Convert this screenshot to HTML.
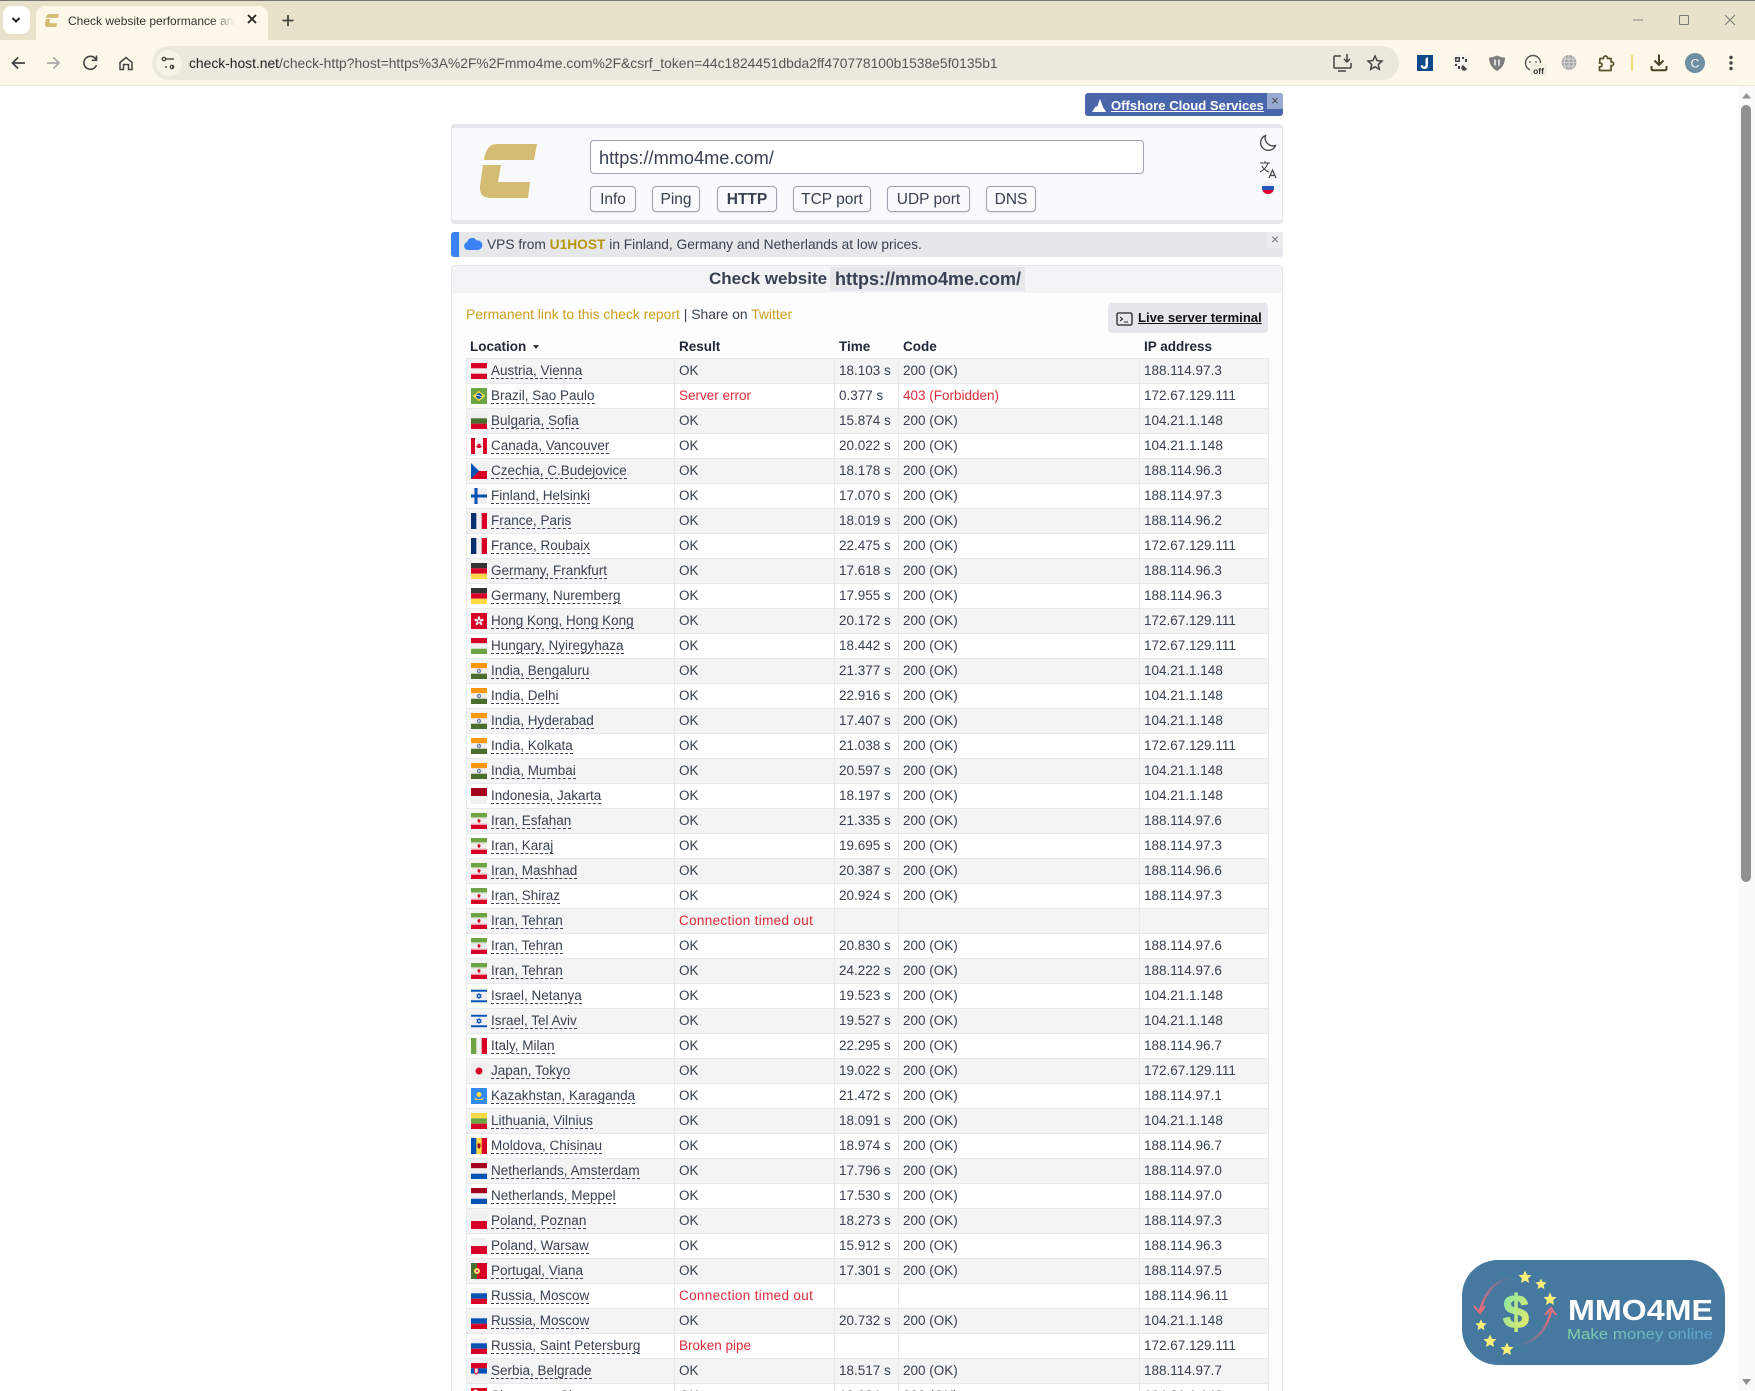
<!DOCTYPE html>
<html lang="en"><head><meta charset="utf-8"><title>Check website performance and response</title>
<style>
*{box-sizing:border-box}
html,body{margin:0;padding:0;width:1755px;height:1391px;overflow:hidden;background:#fff}
body{font-family:"Liberation Sans",sans-serif;color:#374151;font-size:13.5px;position:relative}
.a{position:absolute}
.tb{left:0;top:0;width:1755px;height:40px;background:#e7e2c9;border-top:1px solid #777}
.tl{left:0;top:40px;width:1755px;height:46px;background:#fdf8ea;border-bottom:1px solid #ece8da}
.tab{left:36px;top:6px;width:232px;height:34px;background:#fdf8ea;border-radius:9px 9px 0 0}
.chev{left:3px;top:6px;width:27px;height:28px;background:#fff;border-radius:8px}
.title{left:68px;top:13px;width:168px;height:16px;font-size:12px;line-height:16px;color:#333;white-space:nowrap;overflow:hidden;-webkit-mask-image:linear-gradient(90deg,#000 85%,transparent)}
.addr{left:152px;top:46px;width:1247px;height:34px;background:#ece8dd;border-radius:17px}
.url{left:189px;top:55px;font-size:13.85px;line-height:16px;color:#555;white-space:nowrap}
.url b{font-weight:400;color:#1f1f1f}
.ad{left:1085px;top:93px;width:198px;height:23px;background:#4a66ab;border-radius:3px;color:#fff;font-weight:bold;font-size:13.1px;line-height:25px;padding-left:26px;overflow:hidden}
.ad u{white-space:nowrap}
.ad i{position:absolute;right:0;top:0;width:16px;height:16px;background:#9aa9d0;color:#444;font:normal 13px/15px "Liberation Sans",sans-serif;text-align:center}
.panel{left:451px;top:124px;width:832px;height:100px;background:#f9fafb;border:solid #e5e7eb;border-width:4px 1px;border-radius:3px}
.input{left:590px;top:140px;width:554px;height:34px;background:#fff;border:1px solid #9ca3af;border-radius:4px;font-size:18.2px;line-height:34px;padding-left:8px;color:#374151}
.btn{top:186px;height:26px;background:#f9fafb;border:1px solid #9ca3af;border-radius:4px;font-size:15.5px;line-height:26px;text-align:center;color:#374151;box-shadow:0 1px 2px rgba(0,0,0,.08)}
.alert{left:451px;top:232px;width:832px;height:25px;background:#e5e7eb;border-left:8px solid #3b82f6;border-radius:3px;font-size:13.75px;line-height:26px;padding-left:28px;color:#374151;white-space:nowrap}
.alert b{color:#b8960c}
.alx{left:1267px;top:232px;width:16px;height:16px;background:#ececee;color:#777;font-size:14px;line-height:15px;text-align:center}
.card{left:451px;top:265px;width:832px;height:1130px;background:#fdfdfd;border:1px solid #e5e7eb;border-radius:4px 4px 0 0}
.chead{left:452px;top:266px;width:830px;height:27px;background:#f3f4f6}
.ch1{left:709px;top:267px;font-size:17px;font-weight:bold;line-height:24px;color:#374151;white-space:nowrap}
.ch2{left:830px;top:267px;width:195px;height:24px;background:#e5e7eb;font-size:18px;font-weight:bold;line-height:25px;padding-left:5px;white-space:nowrap}
.perm{left:466px;top:305px;line-height:18px;font-size:13.9px;color:#374151;white-space:nowrap}
.perm span{color:#ca9f1a}
.term{left:1108px;top:303px;width:160px;height:30px;background:#e5e7eb;border-radius:4px}
.term u{position:absolute;left:30px;top:7px;font-size:13.1px;font-weight:bold;line-height:16px;color:#111;white-space:nowrap}
.h{top:339px;font-weight:bold;font-size:13.5px;line-height:16px;color:#1f2937;white-space:nowrap}
table{position:absolute;left:466px;top:358px;width:802px;table-layout:fixed;border-collapse:collapse}
td{height:25px;padding:0 0 0 4px;border:1px solid #e8e9eb;white-space:nowrap;overflow:hidden;line-height:16px;color:#374151}
tr:nth-child(odd) td{background:#f4f4f5}
tr:nth-child(even) td{background:#fff}
td:first-child{position:relative;padding-left:24px}
td a{display:inline-block;line-height:15px;border-bottom:1px dashed #374151}
.f{position:absolute;left:4px;top:4px;width:16px;height:16px}
td.r{color:#e02a3a}
td.c{letter-spacing:.33px}
.sb{left:1738px;top:86px;width:17px;height:1305px;background:#fafafa}
.th{left:1741px;top:105px;width:10px;height:777px;background:#909090;border-radius:5px}
</style></head><body>
<svg width="0" height="0" style="position:absolute"><defs>
<symbol id="s" viewBox="0 0 16 16"><path d="M8 .5l2.2 4.9 5.300.6-4 3.600 1.100 5.300L8 12.200l-4.600 2.700 1.100-5.300-4-3.600 5.300-.6z"/></symbol>
<symbol id="at" viewBox="0 0 16 16"><rect width="16" height="16" fill="#f0f0f0"/><rect width="16" height="5.300" fill="#d80027"/><rect y="10.700" width="16" height="5.300" fill="#d80027"/></symbol>
<symbol id="br" viewBox="0 0 16 16"><rect width="16" height="16" fill="#6da544"/><path d="M8 3l6.500 5L8 13 1.500 8z" fill="#ffda44"/><circle cx="8" cy="8" r="2.900" fill="#0052b4"/><path d="M5.300 7.400q3-.3 5.300 1.600" stroke="#f0f0f0" fill="none" stroke-width=".7"/></symbol>
<symbol id="bg" viewBox="0 0 16 16"><rect width="16" height="5.300" fill="#f0f0f0"/><rect y="5.300" width="16" height="5.400" fill="#496e2d"/><rect y="10.700" width="16" height="5.300" fill="#d80027"/></symbol>
<symbol id="ca" viewBox="0 0 16 16"><rect width="16" height="16" fill="#f0f0f0"/><rect width="4" height="16" fill="#d80027"/><rect x="12" width="4" height="16" fill="#d80027"/><path d="M8 5l.8 1.400 1-.3-.3 1.900.9-.3.4.9L9.200 10H6.800L5.200 8.600l.4-.9.9.3-.3-1.900 1 .3z" fill="#d80027"/></symbol>
<symbol id="cz" viewBox="0 0 16 16"><rect width="16" height="8" fill="#f0f0f0"/><rect y="8" width="16" height="8" fill="#d80027"/><path d="M0 0l8 8-8 8z" fill="#0052b4"/></symbol>
<symbol id="fi" viewBox="0 0 16 16"><rect width="16" height="16" fill="#f0f0f0"/><rect x="3.500" width="3" height="16" fill="#0052b4"/><rect y="6.500" width="16" height="3" fill="#0052b4"/></symbol>
<symbol id="fr" viewBox="0 0 16 16"><rect width="16" height="16" fill="#f0f0f0"/><rect width="5.300" height="16" fill="#0a2f6e"/><rect x="10.700" width="5.300" height="16" fill="#d80027"/></symbol>
<symbol id="de" viewBox="0 0 16 16"><rect width="16" height="5.300" fill="#333"/><rect y="5.300" width="16" height="5.400" fill="#d80027"/><rect y="10.700" width="16" height="5.300" fill="#ffda44"/></symbol>
<symbol id="hk" viewBox="0 0 16 16"><rect width="16" height="16" fill="#d80027"/><g fill="#f0f0f0"><ellipse cx="8" cy="5.200" rx="1.200" ry="2"/><ellipse cx="10.700" cy="7.200" rx="1.200" ry="2" transform="rotate(72 10.700 7.200)"/><ellipse cx="9.700" cy="10.300" rx="1.200" ry="2" transform="rotate(144 9.700 10.300)"/><ellipse cx="6.300" cy="10.300" rx="1.200" ry="2" transform="rotate(216 6.300 10.300)"/><ellipse cx="5.300" cy="7.200" rx="1.200" ry="2" transform="rotate(288 5.300 7.200)"/></g></symbol>
<symbol id="hu" viewBox="0 0 16 16"><rect width="16" height="5.300" fill="#d80027"/><rect y="5.300" width="16" height="5.400" fill="#f0f0f0"/><rect y="10.700" width="16" height="5.300" fill="#6da544"/></symbol>
<symbol id="in" viewBox="0 0 16 16"><rect width="16" height="5.300" fill="#ff9811"/><rect y="5.300" width="16" height="5.400" fill="#f0f0f0"/><rect y="10.700" width="16" height="5.300" fill="#496e2d"/><circle cx="8" cy="8" r="2.200" fill="#6f7fa8"/><circle cx="8" cy="8" r=".9" fill="#f0f0f0"/></symbol>
<symbol id="id" viewBox="0 0 16 16"><rect width="16" height="8" fill="#a2001d"/><rect y="8" width="16" height="8" fill="#f0f0f0"/></symbol>
<symbol id="ir" viewBox="0 0 16 16"><rect width="16" height="5.300" fill="#6da544"/><rect y="5.300" width="16" height="5.400" fill="#f0f0f0"/><rect y="10.700" width="16" height="5.300" fill="#d80027"/><rect y="4.200" width="16" height="1.200" fill="#cfd8c2"/><rect y="10.600" width="16" height="1.200" fill="#f3c6cc"/><path d="M6.400 7l1.600-1 1.600 1-.4 2L8 10l-1.200-1z" fill="#d80027"/></symbol>
<symbol id="il" viewBox="0 0 16 16"><rect width="16" height="16" y="0" fill="#f0f0f0"/><rect y="1.800" width="16" height="1.900" fill="#0052b4"/><rect y="12.300" width="16" height="1.900" fill="#0052b4"/><path d="M8 5.500l2.200 3.800H5.800zM8 10.500L5.800 6.700h4.400z" fill="none" stroke="#0052b4" stroke-width=".8"/></symbol>
<symbol id="it" viewBox="0 0 16 16"><rect width="16" height="16" fill="#f0f0f0"/><rect width="5.300" height="16" fill="#6da544"/><rect x="10.700" width="5.300" height="16" fill="#d80027"/></symbol>
<symbol id="jp" viewBox="0 0 16 16"><rect width="16" height="16" fill="#f0f0f0"/><circle cx="8" cy="8" r="3.500" fill="#d80027"/></symbol>
<symbol id="kz" viewBox="0 0 16 16"><rect width="16" height="16" fill="#338af3"/><circle cx="8" cy="6.500" r="2.500" fill="#ffda44"/><path d="M3 9.500q5 3.500 10 0l-1.500 2.500h-7z" fill="#ffda44"/></symbol>
<symbol id="lt" viewBox="0 0 16 16"><rect width="16" height="5.300" fill="#ffda44"/><rect y="5.300" width="16" height="5.400" fill="#6da544"/><rect y="10.700" width="16" height="5.300" fill="#d80027"/></symbol>
<symbol id="md" viewBox="0 0 16 16"><rect width="16" height="16" fill="#ffda44"/><rect width="5.300" height="16" fill="#0052b4"/><rect x="10.700" width="5.300" height="16" fill="#d80027"/><path d="M6.500 5.500h3v3.500L8 11 6.500 9z" fill="#a2001d"/></symbol>
<symbol id="nl" viewBox="0 0 16 16"><rect width="16" height="5.300" fill="#a2001d"/><rect y="5.300" width="16" height="5.400" fill="#f0f0f0"/><rect y="10.700" width="16" height="5.300" fill="#0052b4"/></symbol>
<symbol id="pl" viewBox="0 0 16 16"><rect width="16" height="8" fill="#f0f0f0"/><rect y="8" width="16" height="8" fill="#d80027"/></symbol>
<symbol id="pt" viewBox="0 0 16 16"><rect width="16" height="16" fill="#d80027"/><rect width="6" height="16" fill="#496e2d"/><circle cx="6" cy="8" r="3" fill="#ffda44"/><circle cx="6" cy="8" r="1.700" fill="#f0f0f0"/><circle cx="6" cy="8" r="1" fill="#d80027"/></symbol>
<symbol id="ru" viewBox="0 0 16 16"><rect width="16" height="5.300" fill="#f0f0f0"/><rect y="5.300" width="16" height="5.400" fill="#0052b4"/><rect y="10.700" width="16" height="5.300" fill="#d80027"/></symbol>
<symbol id="rs" viewBox="0 0 16 16"><rect width="16" height="5.300" fill="#d80027"/><rect y="5.300" width="16" height="5.400" fill="#0052b4"/><rect y="10.700" width="16" height="5.300" fill="#f0f0f0"/><path d="M3 3h4.500v6.500L5.200 12 3 9.500z" fill="#d80027"/><path d="M3.800 5.500h2.900v3.500L5.200 10.500 3.800 9z" fill="#f0f0f0"/></symbol>
<symbol id="sg" viewBox="0 0 16 16"><rect width="16" height="8" fill="#d80027"/><rect y="8" width="16" height="8" fill="#f0f0f0"/><circle cx="4.500" cy="4" r="2.500" fill="#f0f0f0"/></symbol>
<linearGradient id="dg" x1="0" y1="0" x2="1" y2="1"><stop offset="0" stop-color="#7fe8a8"/><stop offset="1" stop-color="#f2ea60"/></linearGradient>
<linearGradient id="tg" x1="0" y1="0" x2="1" y2="0"><stop offset="0" stop-color="#8fe0a4"/><stop offset="1" stop-color="#5fa8e0"/></linearGradient>
<linearGradient id="a1" x1="1" y1="0" x2="0" y2="1"><stop offset="0" stop-color="#45799f"/><stop offset="1" stop-color="#ee6d78"/></linearGradient>
<linearGradient id="a2" x1="0" y1="1" x2="1" y2="0"><stop offset="0" stop-color="#45799f"/><stop offset="1" stop-color="#ee6d78"/></linearGradient>
</defs></svg>

<div class="a tb"></div><div class="a tl"></div>
<div class="a chev"></div>
<div class="a tab"></div>
<div class="a title">Check website performance and response</div>
<div class="a addr"></div>
<div class="a url"><b>check-host.net</b>/check-http?host=https%3A%2F%2Fmmo4me.com%2F&amp;csrf_token=44c1824451dbda2ff470778100b1538e5f0135b1</div>

<svg class="a" style="left:0;top:0" width="1755" height="90" viewBox="0 0 1755 90" fill="none">
<path d="M12.500 18l3.500 3.500 3.500-3.500" stroke="#222" stroke-width="2"/>
<g transform="translate(45 14) scale(.24)"><path d="M17 0H57L54 16H4Q6 0 17 0Z M3 21H21L18 38H50L48 54H11Q-1 54 0 42Z" fill="#d4bc72" /></g>
<path d="M248 15l8 8M256 15l-8 8" stroke="#222" stroke-width="1.800"/>
<path d="M288 15v11M282.500 20.500h11" stroke="#444" stroke-width="1.800"/>
<path d="M1633 20h10" stroke="#888"/><rect x="1679.500" y="15.500" width="9" height="9" rx="1" stroke="#777"/><path d="M1725 15l10 10M1735 15l-10 10" stroke="#777"/>
<path d="M25 63H13M18 57.500L12.500 63l5.500 5.500" stroke="#444" stroke-width="1.800"/>
<path d="M47 63h12M53.500 57.500L59 63l-5.500 5.500" stroke="#aaa" stroke-width="1.800"/>
<path d="M96 59.500A6.500 6.500 0 1 0 96.500 65M96.500 55.500v4.800h-4.800" stroke="#444" stroke-width="1.600"/>
<path d="M120 69.500v-7l6-5 6 5v7h-3.500v-5h-5v5z" stroke="#444" stroke-width="1.500"/>
<circle cx="169" cy="63" r="13" fill="#f7f3e6"/>
<path d="M166 59h8M165 67h2M172 67h2" stroke="#333" stroke-width="1.300"/><circle cx="164" cy="59" r="1.700" stroke="#333" stroke-width="1.200"/><circle cx="172" cy="67" r="1.700" stroke="#333" stroke-width="1.200"/>
<path d="M1341 56h-6a1 1 0 0 0-1 1v10a1 1 0 0 0 1 1h15a1 1 0 0 0 1-1v-4M1338 71h8M1347 54v8M1344 59l3 3 3-3" stroke="#444" stroke-width="1.500"/>
<path d="M1375 56l2.100 4.600 4.900.5-3.700 3.300 1 4.900-4.300-2.500-4.300 2.500 1-4.900-3.700-3.300 4.900-.5z" stroke="#444" stroke-width="1.500"/>
<rect x="1417" y="55" width="16" height="16" fill="#0f4a8a"/><path d="M1428 57v8q0 4-3.500 4t-4-3.500l2-.5q.5 2 2 1.500t1-3v-5z" fill="#fff"/>
<rect x="1453" y="55" width="16" height="16" fill="#f4f2ec"/><path d="M1455 57h5v5h-5zM1456.500 58.500v2h2v-2zM1462 57h2v2h-2zM1465 59h2v3h-2zM1455 64h2v2h-2zM1458 66h2v3h-2zM1463 65a3 3 0 1 0 4 4z" fill="#444" fill-rule="evenodd"/>
<path d="M1497 55.500q4 2 8 2 0 9-8 13.500-8-4.500-8-13.500 4 0 8-2z" fill="#7e7e7e"/><path d="M1495 59.500v6M1499 59.500v6" stroke="#eee" stroke-width="1.600"/>
<circle cx="1533" cy="63" r="7.500" stroke="#555" stroke-width="1.400"/><circle cx="1530" cy="62" r=".9" fill="#555"/><circle cx="1536" cy="62" r=".9" fill="#555"/>
<rect x="1530" y="63" width="17" height="13" rx="3" fill="#f2eee2"/><text x="1538.500" y="74" text-anchor="middle" font-family="Liberation Sans" font-weight="bold" font-size="8.500" fill="#333">off</text>
<circle cx="1569" cy="62.500" r="7.500" fill="#aaa"/><path d="M1561.500 62.500h15M1562.500 59h13M1562.500 66h13M1569 55v15M1565.500 56.500q-2 6 0 12M1572.500 56.500q2 6 0 12" stroke="#ddd" stroke-width=".8"/>
<path d="M1600 58.500h3.500v-.5a2 2 0 0 1 4 0v.5h3.500v3.500h.8a1.800 1.800 0 0 1 0 3.600h-.8v4.900h-11.500v-3.800h.8a1.800 1.800 0 0 0 0-3.600h-.8z" stroke="#5a5030" stroke-width="1.700" stroke-linejoin="round"/>
<rect x="1631" y="55" width="2" height="16" fill="#f2df7e"/>
<path d="M1659 54.500v10M1654.500 60.500l4.500 4.500 4.500-4.500" stroke="#4a4226" stroke-width="2"/><path d="M1651.500 66v2.800a1.500 1.500 0 0 0 1.500 1.500h12a1.500 1.500 0 0 0 1.500-1.500V66" stroke="#4a4226" stroke-width="2"/>
<circle cx="1695" cy="63" r="10" fill="#6f8fa3"/><text x="1695" y="67.500" text-anchor="middle" font-family="Liberation Sans" font-size="12" fill="#fff">C</text>
<circle cx="1731" cy="57.500" r="1.700" fill="#444"/><circle cx="1731" cy="63" r="1.700" fill="#444"/><circle cx="1731" cy="68.500" r="1.700" fill="#444"/>
</svg>

<div class="a ad"><u>Offshore Cloud Services</u><i>×</i></div>
<svg class="a" style="left:1091px;top:97px" width="17" height="17" viewBox="0 0 17 17"><path d="M1 15L5 9l1 1 3-8 3 8 3 5z" fill="#fff"/></svg>

<div class="a panel"></div>
<svg class="a" style="left:478px;top:142px" width="62" height="58" viewBox="478 142 62 58"><path d="M497 144H537L534 160H484Q486 144 497 144Z M483 165H501L498 182H530L528 198H491Q479 198 480 186Z" fill="#d4bc72"/></svg>
<div class="a input">https://mmo4me.com/</div>
<div class="a btn" style="left:590px;width:46px">Info</div>
<div class="a btn" style="left:652px;width:48px">Ping</div>
<div class="a btn" style="left:717px;width:60px;font-weight:bold">HTTP</div>
<div class="a btn" style="left:793px;width:78px">TCP port</div>
<div class="a btn" style="left:887px;width:83px">UDP port</div>
<div class="a btn" style="left:986px;width:50px">DNS</div>
<svg class="a" style="left:1256px;top:132px" width="24" height="66" viewBox="0 0 24 66" fill="none">
<path d="M9.500 3.500a7.700 7.700 0 1 0 10 10A8 8 0 0 1 9.500 3.500z" stroke="#444" stroke-width="1.300"/>
<path d="M4 31h10M9 29v2M12 31q-2 6-8 9M6 34q2 4 7 6" stroke="#444" stroke-width="1.100"/><path d="M13 46l3.500-8 3.500 8M14.200 43.500h4.600" stroke="#444" stroke-width="1.200"/>
<clipPath id="rc"><circle cx="12" cy="56" r="6"/></clipPath><g clip-path="url(#rc)"><rect x="6" y="50" width="12" height="4" fill="#eee"/><rect x="6" y="54" width="12" height="4" fill="#2555c0"/><rect x="6" y="58" width="12" height="4" fill="#d80027"/></g>
</svg>

<div class="a alert">VPS from <b>U1HOST</b> in Finland, Germany and Netherlands at low prices.</div>
<svg class="a" style="left:463px;top:236px" width="20" height="16" viewBox="0 0 20 16"><path d="M5 14a4 4 0 0 1-.8-7.900A5 5 0 0 1 13.500 4.500 4.800 4.800 0 0 1 15.500 14z" fill="#3b82f6"/></svg>
<div class="a alx">×</div>

<div class="a card"></div><div class="a chead"></div>
<div class="a ch1">Check website</div>
<div class="a ch2">https://mmo4me.com/</div>
<div class="a perm"><span>Permanent link to this check report</span> | Share on <span>Twitter</span></div>
<div class="a term"><u>Live server terminal</u></div>
<svg class="a" style="left:1116px;top:311px" width="17" height="16" viewBox="0 0 17 16" fill="none"><rect x="1" y="2" width="15" height="12" rx="1.500" stroke="#222" stroke-width="1.300"/><path d="M4 6l2.500 2L4 10M8 11h4" stroke="#222" stroke-width="1.100"/></svg>

<div class="a h" style="left:470px">Location</div>
<svg class="a" style="left:533px;top:344px" width="6" height="6"><path d="M0 1h6L3 5z" fill="#333"/></svg>
<div class="a h" style="left:679px">Result</div>
<div class="a h" style="left:839px">Time</div>
<div class="a h" style="left:903px">Code</div>
<div class="a h" style="left:1144px">IP address</div>

<table><colgroup><col style="width:208px"><col style="width:160px"><col style="width:64px"><col style="width:241px"><col style="width:129px"></colgroup>
<tr><td><svg class="f"><use href="#at"/></svg><a>Austria, Vienna</a><td>OK<td>18.103 s<td>200 (OK)<td>188.114.97.3
<tr><td><svg class="f"><use href="#br"/></svg><a>Brazil, Sao Paulo</a><td class="r">Server error<td>0.377 s<td class="r">403 (Forbidden)<td>172.67.129.111
<tr><td><svg class="f"><use href="#bg"/></svg><a>Bulgaria, Sofia</a><td>OK<td>15.874 s<td>200 (OK)<td>104.21.1.148
<tr><td><svg class="f"><use href="#ca"/></svg><a>Canada, Vancouver</a><td>OK<td>20.022 s<td>200 (OK)<td>104.21.1.148
<tr><td><svg class="f"><use href="#cz"/></svg><a>Czechia, C.Budejovice</a><td>OK<td>18.178 s<td>200 (OK)<td>188.114.96.3
<tr><td><svg class="f"><use href="#fi"/></svg><a>Finland, Helsinki</a><td>OK<td>17.070 s<td>200 (OK)<td>188.114.97.3
<tr><td><svg class="f"><use href="#fr"/></svg><a>France, Paris</a><td>OK<td>18.019 s<td>200 (OK)<td>188.114.96.2
<tr><td><svg class="f"><use href="#fr"/></svg><a>France, Roubaix</a><td>OK<td>22.475 s<td>200 (OK)<td>172.67.129.111
<tr><td><svg class="f"><use href="#de"/></svg><a>Germany, Frankfurt</a><td>OK<td>17.618 s<td>200 (OK)<td>188.114.96.3
<tr><td><svg class="f"><use href="#de"/></svg><a>Germany, Nuremberg</a><td>OK<td>17.955 s<td>200 (OK)<td>188.114.96.3
<tr><td><svg class="f"><use href="#hk"/></svg><a>Hong Kong, Hong Kong</a><td>OK<td>20.172 s<td>200 (OK)<td>172.67.129.111
<tr><td><svg class="f"><use href="#hu"/></svg><a>Hungary, Nyiregyhaza</a><td>OK<td>18.442 s<td>200 (OK)<td>172.67.129.111
<tr><td><svg class="f"><use href="#in"/></svg><a>India, Bengaluru</a><td>OK<td>21.377 s<td>200 (OK)<td>104.21.1.148
<tr><td><svg class="f"><use href="#in"/></svg><a>India, Delhi</a><td>OK<td>22.916 s<td>200 (OK)<td>104.21.1.148
<tr><td><svg class="f"><use href="#in"/></svg><a>India, Hyderabad</a><td>OK<td>17.407 s<td>200 (OK)<td>104.21.1.148
<tr><td><svg class="f"><use href="#in"/></svg><a>India, Kolkata</a><td>OK<td>21.038 s<td>200 (OK)<td>172.67.129.111
<tr><td><svg class="f"><use href="#in"/></svg><a>India, Mumbai</a><td>OK<td>20.597 s<td>200 (OK)<td>104.21.1.148
<tr><td><svg class="f"><use href="#id"/></svg><a>Indonesia, Jakarta</a><td>OK<td>18.197 s<td>200 (OK)<td>104.21.1.148
<tr><td><svg class="f"><use href="#ir"/></svg><a>Iran, Esfahan</a><td>OK<td>21.335 s<td>200 (OK)<td>188.114.97.6
<tr><td><svg class="f"><use href="#ir"/></svg><a>Iran, Karaj</a><td>OK<td>19.695 s<td>200 (OK)<td>188.114.97.3
<tr><td><svg class="f"><use href="#ir"/></svg><a>Iran, Mashhad</a><td>OK<td>20.387 s<td>200 (OK)<td>188.114.96.6
<tr><td><svg class="f"><use href="#ir"/></svg><a>Iran, Shiraz</a><td>OK<td>20.924 s<td>200 (OK)<td>188.114.97.3
<tr><td><svg class="f"><use href="#ir"/></svg><a>Iran, Tehran</a><td class="r c">Connection timed out<td><td><td>
<tr><td><svg class="f"><use href="#ir"/></svg><a>Iran, Tehran</a><td>OK<td>20.830 s<td>200 (OK)<td>188.114.97.6
<tr><td><svg class="f"><use href="#ir"/></svg><a>Iran, Tehran</a><td>OK<td>24.222 s<td>200 (OK)<td>188.114.97.6
<tr><td><svg class="f"><use href="#il"/></svg><a>Israel, Netanya</a><td>OK<td>19.523 s<td>200 (OK)<td>104.21.1.148
<tr><td><svg class="f"><use href="#il"/></svg><a>Israel, Tel Aviv</a><td>OK<td>19.527 s<td>200 (OK)<td>104.21.1.148
<tr><td><svg class="f"><use href="#it"/></svg><a>Italy, Milan</a><td>OK<td>22.295 s<td>200 (OK)<td>188.114.96.7
<tr><td><svg class="f"><use href="#jp"/></svg><a>Japan, Tokyo</a><td>OK<td>19.022 s<td>200 (OK)<td>172.67.129.111
<tr><td><svg class="f"><use href="#kz"/></svg><a>Kazakhstan, Karaganda</a><td>OK<td>21.472 s<td>200 (OK)<td>188.114.97.1
<tr><td><svg class="f"><use href="#lt"/></svg><a>Lithuania, Vilnius</a><td>OK<td>18.091 s<td>200 (OK)<td>104.21.1.148
<tr><td><svg class="f"><use href="#md"/></svg><a>Moldova, Chisinau</a><td>OK<td>18.974 s<td>200 (OK)<td>188.114.96.7
<tr><td><svg class="f"><use href="#nl"/></svg><a>Netherlands, Amsterdam</a><td>OK<td>17.796 s<td>200 (OK)<td>188.114.97.0
<tr><td><svg class="f"><use href="#nl"/></svg><a>Netherlands, Meppel</a><td>OK<td>17.530 s<td>200 (OK)<td>188.114.97.0
<tr><td><svg class="f"><use href="#pl"/></svg><a>Poland, Poznan</a><td>OK<td>18.273 s<td>200 (OK)<td>188.114.97.3
<tr><td><svg class="f"><use href="#pl"/></svg><a>Poland, Warsaw</a><td>OK<td>15.912 s<td>200 (OK)<td>188.114.96.3
<tr><td><svg class="f"><use href="#pt"/></svg><a>Portugal, Viana</a><td>OK<td>17.301 s<td>200 (OK)<td>188.114.97.5
<tr><td><svg class="f"><use href="#ru"/></svg><a>Russia, Moscow</a><td class="r c">Connection timed out<td><td><td>188.114.96.11
<tr><td><svg class="f"><use href="#ru"/></svg><a>Russia, Moscow</a><td>OK<td>20.732 s<td>200 (OK)<td>104.21.1.148
<tr><td><svg class="f"><use href="#ru"/></svg><a>Russia, Saint Petersburg</a><td class="r">Broken pipe<td><td><td>172.67.129.111
<tr><td><svg class="f"><use href="#rs"/></svg><a>Serbia, Belgrade</a><td>OK<td>18.517 s<td>200 (OK)<td>188.114.97.7
<tr><td><svg class="f"><use href="#sg"/></svg><a>Singapore, Singapore</a><td>OK<td>19.984 s<td>200 (OK)<td>104.21.1.148
</table>

<div class="a sb"></div><div class="a th"></div>
<svg class="a" style="left:1738px;top:86px" width="17" height="1305" viewBox="0 0 17 1305"><path d="M4 12.500L8.500 7l4.500 5.500z" fill="#909090"/><path d="M4 1293l4.500 6 4.500-6z" fill="#909090"/></svg>

<svg class="a" style="left:1462px;top:1260px" width="263" height="105" viewBox="1462 1260 263 105" fill="none">
<rect x="1462" y="1260" width="263" height="105" rx="36" fill="#45799f"/>
<path d="M1512 1278Q1488 1281 1480 1311" stroke="url(#a1)" stroke-width="2.500"/><path d="M1474 1306l6 7 5-7" stroke="#ee6d78" stroke-width="2"/>
<path d="M1516 1345Q1544 1342 1551 1311" stroke="url(#a2)" stroke-width="2.500"/><path d="M1545 1315l6-7 5 7" stroke="#ee6d78" stroke-width="2"/>
<text x="1516" y="1328" text-anchor="middle" font-family="Liberation Sans" font-weight="bold" font-size="47" fill="url(#dg)" stroke="url(#dg)" stroke-width="1">$</text>
<g fill="#fdf07a"><use href="#s" x="1518" y="1270" width="14" height="14"/><use href="#s" x="1535" y="1278" width="12" height="12"/><use href="#s" x="1543" y="1292" width="14" height="14"/><use href="#s" x="1475" y="1319" width="12" height="12"/><use href="#s" x="1483" y="1334" width="14" height="14"/><use href="#s" x="1500" y="1342" width="14" height="14"/></g>
<text x="1568" y="1320" font-family="Liberation Sans" font-weight="bold" font-size="29" fill="#fff" textLength="145" lengthAdjust="spacingAndGlyphs">MMO4ME</text>
<text x="1567" y="1339" font-family="Liberation Sans" font-size="15" fill="url(#tg)" opacity=".85" textLength="146" lengthAdjust="spacingAndGlyphs">Make money online</text>
</svg>
</body></html>
